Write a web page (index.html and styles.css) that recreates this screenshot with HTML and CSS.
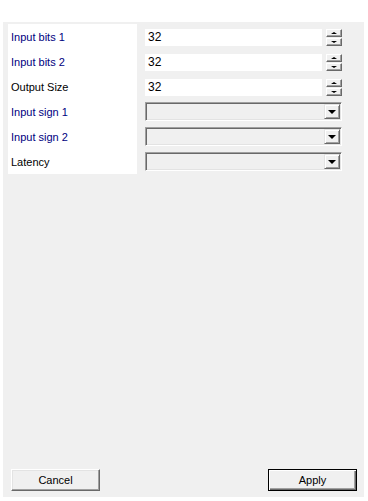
FILE: index.html
```html
<!DOCTYPE html>
<html lang="en">
<head>
  <meta charset="UTF-8">
  <title>Settings</title>
  <link rel="stylesheet" href="styles.css">
</head>
<body>
  <div class="panel">
    <!-- Property rows -->
    <div class="props">
      <div class="labels">
        <div class="label blue">Input bits 1</div>
        <div class="label blue">Input bits 2</div>
        <div class="label">Output Size</div>
        <div class="label blue">Input sign 1</div>
        <div class="label blue">Input sign 2</div>
        <div class="label">Latency</div>
      </div>
      <div class="fields">
        <div class="row">
          <div class="num">32</div>
          <div class="spin"><span class="up"></span><span class="down"></span></div>
        </div>
        <div class="row">
          <div class="num">32</div>
          <div class="spin"><span class="up"></span><span class="down"></span></div>
        </div>
        <div class="row">
          <div class="num">32</div>
          <div class="spin"><span class="up"></span><span class="down"></span></div>
        </div>
        <div class="row">
          <div class="combo"><span class="drop"></span></div>
        </div>
        <div class="row">
          <div class="combo"><span class="drop"></span></div>
        </div>
        <div class="row">
          <div class="combo"><span class="drop"></span></div>
        </div>
      </div>
    </div>

    <!-- Buttons -->
    <div class="footer">
      <button class="btn">Cancel</button>
      <button class="btn default">Apply</button>
    </div>
  </div>
</body>
</html>
```

FILE: styles.css
```css
* {
  margin: 0;
  padding: 0;
  box-sizing: border-box;
  font-family: 'Liberation Sans', Arial, sans-serif;
}

body {
  background: #ffffff;
  font-size: 11px;
  color: #000;
}

.panel {
  margin: 22px 0 0 3px;
  width: 361px;
  height: 475px;
  background: #f0f0f0;
  padding: 2px 0 0 5px;
  display: flex;
  flex-direction: column;
}

/* Property rows */
.props {
  display: flex;
}

.labels {
  width: 129px;
  background: #ffffff;
}

.label {
  height: 25px;
  line-height: 25px;
  padding: 1px 0 0 3px;
  color: #000;
}

.label.blue {
  color: #000080;
}

.fields {
  margin-left: 8px;
  width: 197px;
}

.row {
  height: 25px;
  display: flex;
  align-items: flex-start;
}

.num {
  margin-top: 5px;
  width: 177px;
  height: 17px;
  line-height: 17px;
  background: #ffffff;
  padding-left: 3px;
  font-size: 12px;
}

.spin {
  margin: 5px 0 0 4px;
  width: 16px;
  height: 17px;
  display: flex;
  flex-direction: column;
}

.spin span {
  position: relative;
  height: 8px;
  background: #f0f0f0;
  border-top: 1px solid #ffffff;
  border-left: 1px solid #ffffff;
  border-right: 1px solid #696969;
  border-bottom: 1px solid #696969;
  box-shadow: inset -1px -1px 0 #a0a0a0;
}

.spin span.down {
  margin-top: 1px;
}

.spin span::after {
  content: '';
  position: absolute;
  left: 4px;
  top: 2px;
  border-left: 3px solid transparent;
  border-right: 3px solid transparent;
}

.spin .up::after {
  border-bottom: 2px solid #000;
}

.spin .down::after {
  border-top: 2px solid #000;
}

.combo {
  position: relative;
  margin-top: 3px;
  width: 197px;
  height: 19px;
  background: #f0f0f0;
  border-top: 1px solid #a0a0a0;
  border-left: 1px solid #a0a0a0;
  border-right: 1px solid #ffffff;
  border-bottom: 1px solid #ffffff;
  box-shadow: inset 1px 1px 0 #696969, inset -1px -1px 0 #e3e3e3;
}

.drop {
  position: absolute;
  right: 1px;
  top: 1px;
  width: 16px;
  height: 15px;
  background: #f0f0f0;
  border-top: 1px solid #e3e3e3;
  border-left: 1px solid #e3e3e3;
  border-right: 1px solid #696969;
  border-bottom: 1px solid #696969;
  box-shadow: inset 1px 1px 0 #ffffff, inset -1px -1px 0 #a0a0a0;
}

.drop::after {
  content: '';
  position: absolute;
  left: 3px;
  top: 5px;
  border-left: 4px solid transparent;
  border-right: 4px solid transparent;
  border-top: 4px solid #000;
}

/* Footer buttons */
.footer {
  margin-top: auto;
  margin-bottom: 6px;
  padding: 0 7px 0 3px;
  display: flex;
  justify-content: space-between;
}

.btn {
  width: 89px;
  height: 22px;
  background: #f0f0f0;
  font-size: 11px;
  color: #000;
  border-top: 1px solid #ffffff;
  border-left: 1px solid #ffffff;
  border-right: 1px solid #696969;
  border-bottom: 1px solid #696969;
  box-shadow: inset -1px -1px 0 #a0a0a0, inset 1px 1px 0 #e3e3e3;
}

.btn.default {
  border: 1px solid #000;
  box-shadow: inset 1px 1px 0 #ffffff, inset -1px -1px 0 #696969, inset -2px -2px 0 #a0a0a0;
}
```
